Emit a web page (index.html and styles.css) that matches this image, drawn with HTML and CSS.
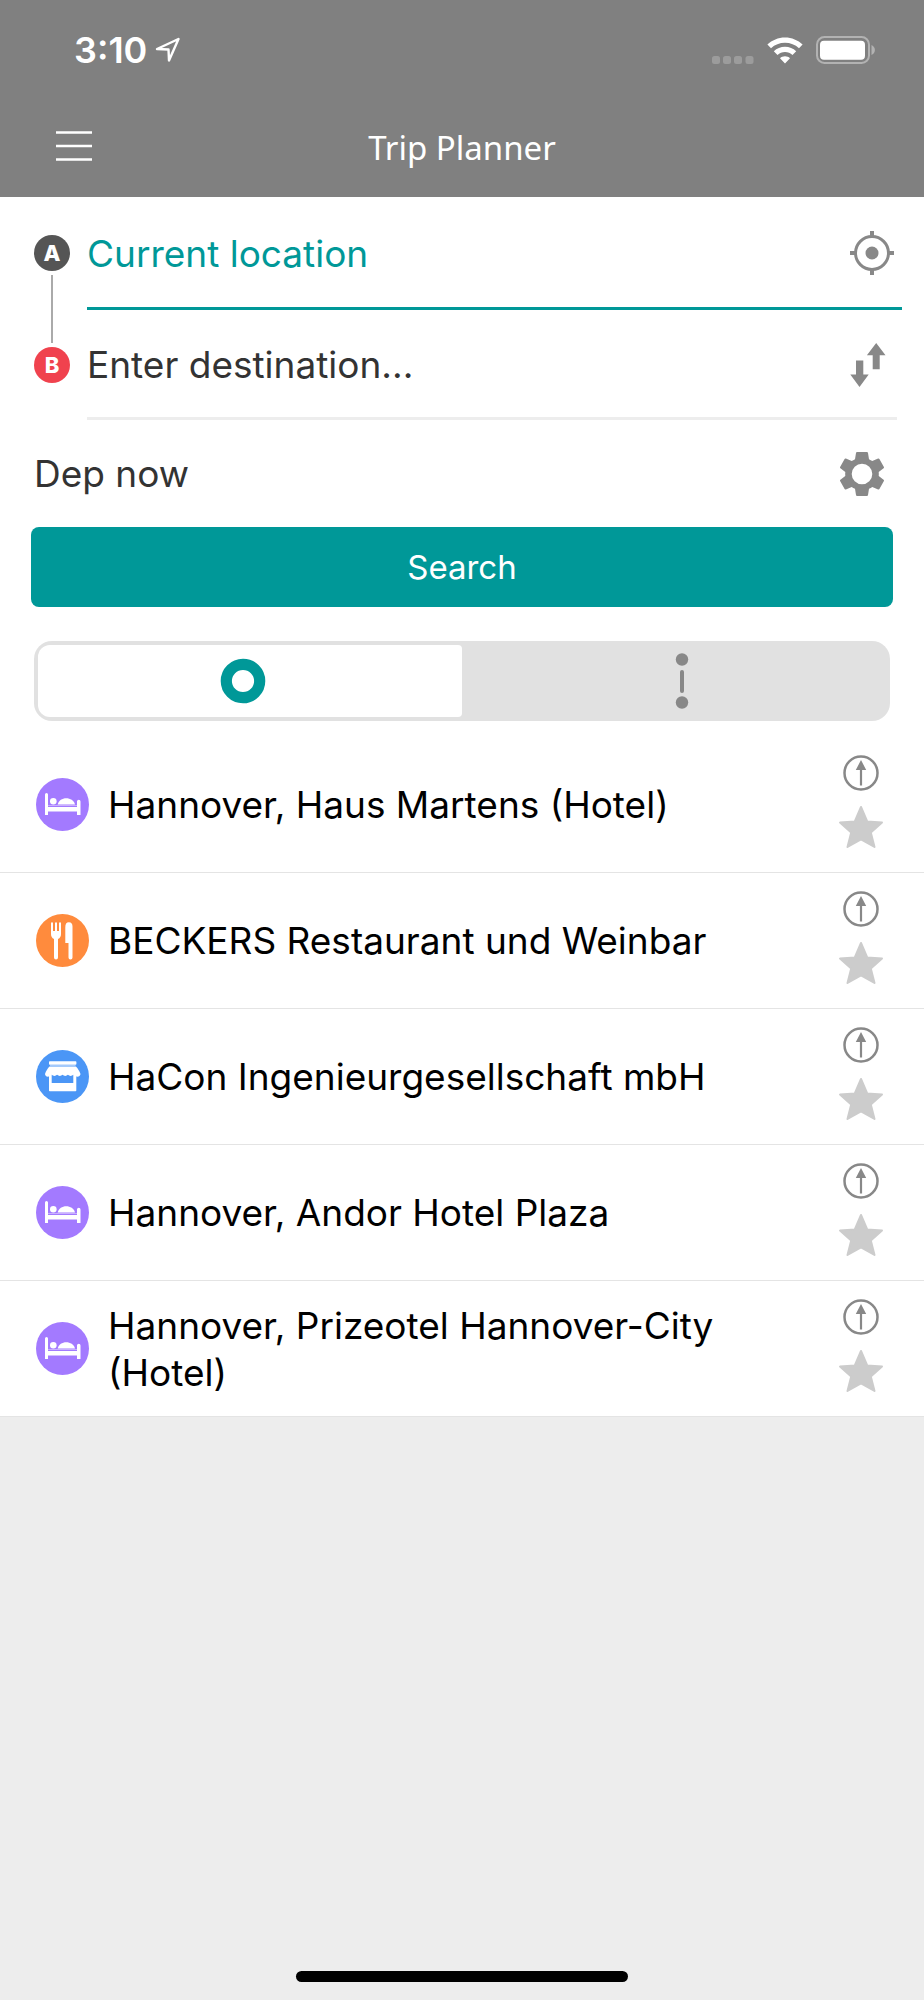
FILE: index.html
```html
<!DOCTYPE html>
<html lang="en">
<head>
<meta charset="utf-8">
<meta name="viewport" content="width=device-width, initial-scale=1">
<title>Trip Planner</title>
<link rel="stylesheet" href="styles.css">
</head>
<body>
<svg class="sprite" aria-hidden="true">
  <symbol id="bed" viewBox="0 0 53 53">
    <circle cx="26.5" cy="26.5" r="26.5" fill="#a37aff"/>
    <path fill="#fff" d="M9 16.5a1.5 1.5 0 0 1 3 0V29h29v-5.500a1.700 1.700 0 0 1 3.500 0V37H41v-3.500H12V37H9z"/>
    <circle cx="17.300" cy="23.300" r="3.300" fill="#fff"/>
    <path fill="#fff" d="M21.700 26.500c1-4 4.500-6.200 8.500-6.200s7.800 2.200 8.800 6.200z"/>
    <path stroke="#c9b0ff" d="M12 27.500h29"/>
  </symbol>
  <symbol id="food" viewBox="0 0 53 53">
    <circle cx="26.500" cy="26.500" r="26.500" fill="#ff8b3d"/>
    <path fill="#fff" d="M15 9.300a1 1 0 0 1 2 0V17h2V9.300a1 1 0 0 1 2 0V17h2V9.300a1 1 0 0 1 2 0V20c0 2.500-1 4-3 5v18.500a2 2 0 0 1-4 0V25c-2-1-3-2.500-3-5z"/>
    <path fill="#fff" d="M29.300 29V13.500c0-3.500 1-5.200 3.600-5.200s3.600 1.700 3.600 4.200v31a2 2 0 0 1-4 0V29z"/>
  </symbol>
  <symbol id="shop" viewBox="0 0 53 53">
    <circle cx="26.500" cy="26.500" r="26.500" fill="#4b96f6"/>
    <rect x="13" y="11.300" width="27.400" height="3.500" rx=".8" fill="#fff"/>
    <path stroke="#a5cafb" d="M14 15.500h25.500"/>
    <path fill="#fff" d="M13.500 16.500h26.400c2 2 3.500 4.500 4.600 7.500-.2 2-2 3-4.200 2.500v14a.8.8 0 0 1-.8.8H13.800a.8.8 0 0 1-.8-.8v-14C10.800 27 9.200 26 9 24c1-3 2.500-5.500 4.500-7.500z"/>
    <path fill="#4b96f6" d="M15.700 24.800c1.500 1.500 4 1.500 5.400 0 1.500 1.500 4 1.500 5.400 0 1.500 1.500 4 1.500 5.400 0 1.500 1.500 4 1.500 5.400 0V33H15.700z"/>
  </symbol>
  <symbol id="go" viewBox="0 0 36 36">
    <circle cx="18" cy="18" r="16.500" fill="none" stroke="#888" stroke-width="2.500"/>
    <path fill="#888" d="M18 5l5.200 10h-4.100v15.500h-2.200V15h-4.100z"/>
  </symbol>
  <symbol id="star" viewBox="0 0 46 44">
    <path fill="#ccc" stroke="#ccc" stroke-width="2" stroke-linejoin="round" d="M23 2l6.200 14.500L44 17.600 32.800 27.500 36.500 42 23 34.300 9.500 42l3.700-14.500L2 17.600l14.800-1.100z"/>
  </symbol>
</svg>

<div class="app">
  <header class="top">
    <div class="status">
      <div class="clock">
        <span>3:10</span>
        <svg width="26" height="26" viewBox="0 0 26 26" fill="none" stroke="#fff" stroke-width="2.400" stroke-linejoin="round"><path d="M2 12L23.500 2 14 23.500 13.500 12.500z"/></svg>
      </div>
      <div class="signals">
        <svg class="dots" width="42" height="8" viewBox="0 0 42 8" fill="#9c9c9c"><rect width="8" height="8" rx="2.500"/><rect x="11" width="8" height="8" rx="2.500"/><rect x="22" width="8" height="8" rx="2.500"/><rect x="33.500" width="8" height="8" rx="2.500"/></svg>
        <svg width="36" height="27" viewBox="0 0 36 27" fill="#fff"><path d="M18 .5C24.800.5 31 3.200 35.600 7.500L32 11.200C28.200 7.800 23.300 5.800 18 5.800S7.800 7.800 4 11.200L.4 7.500C5 3.200 11.200.5 18 .5z"/><path d="M18 9.800c4.300 0 8.200 1.700 11.200 4.400l-3.700 3.800c-2-1.800-4.600-2.900-7.500-2.900s-5.500 1.100-7.500 2.900l-3.700-3.800c3-2.700 6.900-4.400 11.200-4.400z"/><path d="M18 19.300c1.900 0 3.700.7 5 1.900L18 26.500l-5-5.300c1.300-1.200 3.100-1.900 5-1.900z"/></svg>
        <svg width="60" height="28" viewBox="0 0 60 28"><rect x="1" y="1" width="52" height="26" rx="7.500" fill="none" stroke="#b2b2b2" stroke-width="2"/><rect x="4" y="4.800" width="45" height="19" rx="4" fill="#fff"/><path fill="#b2b2b2" d="M55.500 9c4.500 2 4.500 8 0 10z"/></svg>
      </div>
    </div>
    <div class="bar">
      <button class="menu" aria-label="Menu"><svg width="36" height="30" viewBox="0 0 36 30" stroke="#fff" stroke-width="2.300"><path d="M0 1.500h36M0 15h36M0 28.500h36"/></svg></button>
      <h1>Trip Planner</h1>
    </div>
  </header>

  <main>
    <form class="planner">
      <div class="route">
        <div class="markers">
          <label class="badge from" for="from">A</label>
          <span class="link"></span>
          <label class="badge to" for="to">B</label>
        </div>
        <div class="fields">
          <div class="field active">
            <input id="from" type="text" value="Current location">
            <button type="button" aria-label="Use my position"><svg width="44" height="44" viewBox="0 0 44 44" fill="none" stroke="#888"><circle cx="22" cy="22" r="16.500" stroke-width="3"/><circle cx="22" cy="22" r="6.500" fill="#888" stroke="none"/><path stroke-width="4" d="M22 0v5M22 39v5M0 22h5M39 22h5"/></svg></button>
          </div>
          <div class="field">
            <input id="to" type="text" placeholder="Enter destination...">
            <button type="button" aria-label="Swap start and destination"><svg width="36" height="44" viewBox="0 0 36 44" fill="#888"><path d="M6 17.500h7.300v14h5.400L9.500 44 .3 31.500H6zM26.200 0l9.300 12.300h-5.800v14h-7v-14h-5.800z"/></svg></button>
          </div>
        </div>
      </div>
      <div class="options">
        <button type="button" class="when">Dep now</button>
        <button type="button" aria-label="Settings"><svg width="44" height="44" viewBox="0 0 44 44"><path fill="#888" fill-rule="evenodd" d="M17 0h10q.8 0 1 .9l1 6.300q1.800.8 3.300 1.900l5.800-2.500q.9-.3 1.300.4l4.500 7.900q.3.800-.3 1.300l-4.900 3.800q.2 2 0 4l4.900 3.800q.6.500.3 1.300l-4.500 7.900q-.4.700-1.300.4l-5.800-2.500q-1.500 1.100-3.300 1.900l-1 6.300q-.2.900-1 .9H17q-.8 0-1-.9l-1-6.300q-1.800-.8-3.300-1.900l-5.800 2.500q-.9.300-1.300-.4L.1 29.100q-.3-.8.300-1.300L5.300 24q-.2-2 0-4L.4 16.200q-.6-.5-.3-1.300L4.600 7q.4-.7 1.300-.4l5.800 2.500q1.500-1.100 3.300-1.900l1-6.300q.2-.9 1-.9zm5 11.700a10.300 10.300 0 1 0 0 20.600 10.300 10.300 0 0 0 0-20.600z"/></svg></button>
      </div>
      <button type="button" class="search">Search</button>
      <div class="tabs" role="tablist">
        <button type="button" role="tab" aria-selected="true" aria-label="Places"><svg width="46" height="46" viewBox="0 0 46 46"><circle cx="23" cy="23" r="16.700" fill="none" stroke="#009898" stroke-width="11.200"/></svg></button>
        <button type="button" role="tab" aria-selected="false" aria-label="Connections"><svg width="14" height="56" viewBox="0 0 14 56" fill="#888"><circle cx="7" cy="6.500" r="6.200"/><rect x="5" y="17" width="4" height="23" rx="2"/><circle cx="7" cy="49.500" r="6.200"/></svg></button>
      </div>
    </form>

    <ul class="places">
      <li>
        <svg class="kind"><use href="#bed"/></svg>
        <span class="name">Hannover, Haus Martens (Hotel)</span>
        <span class="actions"><button aria-label="Go there"><svg class="go"><use href="#go"/></svg></button><button aria-label="Favourite"><svg class="star"><use href="#star"/></svg></button></span>
      </li>
      <li>
        <svg class="kind"><use href="#food"/></svg>
        <span class="name">BECKERS Restaurant und Weinbar</span>
        <span class="actions"><button aria-label="Go there"><svg class="go"><use href="#go"/></svg></button><button aria-label="Favourite"><svg class="star"><use href="#star"/></svg></button></span>
      </li>
      <li>
        <svg class="kind"><use href="#shop"/></svg>
        <span class="name">HaCon Ingenieurgesellschaft mbH</span>
        <span class="actions"><button aria-label="Go there"><svg class="go"><use href="#go"/></svg></button><button aria-label="Favourite"><svg class="star"><use href="#star"/></svg></button></span>
      </li>
      <li>
        <svg class="kind"><use href="#bed"/></svg>
        <span class="name">Hannover, Andor Hotel Plaza</span>
        <span class="actions"><button aria-label="Go there"><svg class="go"><use href="#go"/></svg></button><button aria-label="Favourite"><svg class="star"><use href="#star"/></svg></button></span>
      </li>
      <li>
        <svg class="kind"><use href="#bed"/></svg>
        <span class="name">Hannover, Prizeotel Hannover-City (Hotel)</span>
        <span class="actions"><button aria-label="Go there"><svg class="go"><use href="#go"/></svg></button><button aria-label="Favourite"><svg class="star"><use href="#star"/></svg></button></span>
      </li>
    </ul>
  </main>

  <footer class="home"><span></span></footer>
</div>
</body>
</html>
```

FILE: styles.css
```css
* {
  box-sizing: border-box;
}

body {
  margin: 0;
  background: #ededed;
  color: #000;
  font-family: Inter, "Liberation Sans", sans-serif;
  font-size: 37px;
  line-height: 47px;
}

button,
input {
  margin: 0;
  padding: 0;
  border: 0;
  background: none;
  color: inherit;
  font: inherit;
}

svg {
  display: block;
}

.sprite {
  display: none;
}

.app {
  display: flex;
  flex-direction: column;
  min-height: 100vh;
}

/* Header */
.top {
  padding-bottom: 26px;
  background: #808080;
  color: #fff;
}

.status {
  display: flex;
  align-items: center;
  justify-content: space-between;
  height: 100px;
  padding: 0 48px 0 74px;
}

.clock {
  display: flex;
  align-items: center;
  gap: 8px;
  font-size: 36px;
  font-weight: 600;
}

.signals {
  display: flex;
  align-items: center;
  gap: 13px;
}

.dots {
  align-self: flex-end;
}

.bar {
  display: grid;
  grid-template-columns: 1fr auto 1fr;
  align-items: center;
  padding: 0 56px;
}

.menu {
  justify-self: start;
  padding-top: 20px;
}

h1 {
  margin: 0;
  padding-top: 24px;
  font-family: "Noto Sans", "Open Sans", sans-serif;
  font-size: 33px;
  font-weight: 400;
}

/* Search form */
.planner {
  padding-bottom: 16px;
  background: #fff;
  color: #333;
}

.route {
  display: flex;
  gap: 17px;
  padding-left: 34px;
}

.markers {
  display: flex;
  flex-direction: column;
  align-items: center;
  gap: 4px;
  padding-top: 38px;
}

.badge {
  width: 36px;
  height: 36px;
  border-radius: 50%;
  color: #fff;
  font-size: 22px;
  font-weight: 800;
  line-height: 36px;
  text-align: center;
}

.from {
  background: #555;
}

.to {
  background: #f0424e;
}

.link {
  width: 2px;
  height: 68px;
  background: #aaa;
}

.fields {
  flex: 1;
}

.field {
  display: flex;
  align-items: center;
  height: 110px;
  margin-right: 27px;
  padding: 2px 11px 0 0;
  border-bottom: 3px solid #ededed;
}

.active {
  height: 113px;
  margin-right: 22px;
  padding-right: 8px;
  border-color: #009898;
  color: #009898;
}

.field input {
  flex: 1;
  min-width: 0;
  outline: 0;
}

.field input::placeholder {
  color: #333;
  opacity: 1;
}

.options {
  display: flex;
  align-items: center;
  justify-content: space-between;
  height: 107px;
  padding: 0 40px 0 34px;
}

.search {
  display: block;
  width: calc(100% - 62px);
  height: 80px;
  margin: 0 31px 34px;
  border-radius: 8px;
  background: #009898;
  color: #fff;
  font-size: 33px;
}

.tabs {
  display: flex;
  height: 80px;
  margin: 0 34px;
  padding: 4px;
  border-radius: 18px;
  background: #e1e1e1;
}

.tabs button {
  display: flex;
  flex: 1;
  align-items: center;
  justify-content: center;
  padding: 0 0 0 15px;
}

.tabs [aria-selected="true"] {
  padding: 0 15px 0 0;
  border-radius: 12px 4px 4px 12px;
  background: #fff;
}

/* Places */
.places {
  margin: 0;
  padding: 0;
  list-style: none;
  background: #fff;
}

.places li {
  display: flex;
  align-items: center;
  min-height: 136px;
  padding: 0 40px 0 36px;
  border-bottom: 1px solid #e4e4e4;
}

.kind {
  flex: none;
  width: 53px;
  height: 53px;
}

.name {
  flex: 1;
  padding: 0 40px 0 19px;
}

.actions {
  display: flex;
  flex-direction: column;
  align-items: center;
  gap: 14px;
  padding-bottom: 5px;
}

.go {
  width: 36px;
  height: 36px;
}

.star {
  width: 46px;
  height: 44px;
}

.home {
  margin-top: auto;
  padding-bottom: 18px;
}

.home span {
  display: block;
  width: 36%;
  height: 11px;
  margin: 0 auto;
  border-radius: 6px;
  background: #000;
}
```
